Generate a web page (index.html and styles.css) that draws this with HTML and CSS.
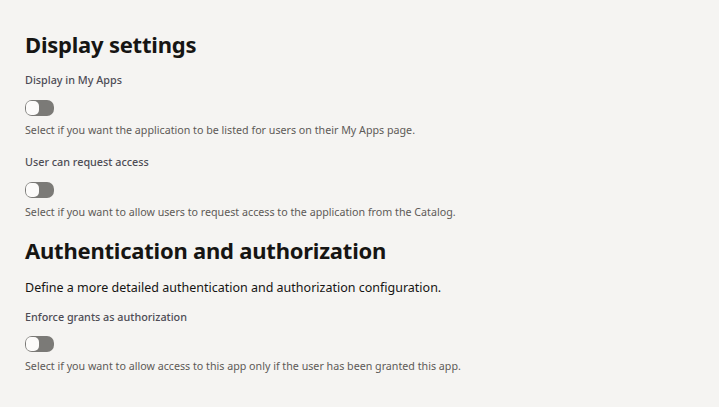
FILE: index.html
```html
<!DOCTYPE html>
<html lang="en">
<head>
  <meta charset="UTF-8">
  <title>Application settings</title>
  <link rel="stylesheet" href="styles.css">
</head>
<body>
  <div class="page">
    <section class="section">
      <h2 class="section-title">Display settings</h2>

      <div class="field">
        <div class="field-label">Display in My Apps</div>
        <button class="switch" type="button" aria-pressed="false"><span class="switch-knob"></span></button>
        <p class="field-help">Select if you want the application to be listed for users on their My Apps page.</p>
      </div>

      <div class="field">
        <div class="field-label">User can request access</div>
        <button class="switch" type="button" aria-pressed="false"><span class="switch-knob"></span></button>
        <p class="field-help">Select if you want to allow users to request access to the application from the Catalog.</p>
      </div>
    </section>

    <section class="section">
      <h2 class="section-title">Authentication and authorization</h2>
      <p class="section-desc">Define a more detailed authentication and authorization configuration.</p>

      <div class="field">
        <div class="field-label">Enforce grants as authorization</div>
        <button class="switch" type="button" aria-pressed="false"><span class="switch-knob"></span></button>
        <p class="field-help">Select if you want to allow access to this app only if the user has been granted this app.</p>
      </div>
    </section>
  </div>
</body>
</html>
```

FILE: styles.css
```css
:root {
  --bg: #f5f4f2;
  --text: #161513;
  --text-label: #4d4c55;
  --text-help: #5d5a57;
  --switch-track: #7b7a77;
  --switch-knob: #fcfbfa;
  --font-sans: "Noto Sans", "Open Sans", "Liberation Sans", sans-serif;
}

* {
  box-sizing: border-box;
  margin: 0;
  padding: 0;
}

body {
  background-color: var(--bg);
  color: var(--text);
  font-family: var(--font-sans);
  -webkit-font-smoothing: antialiased;
}

.page {
  padding: 30px 25px;
}

.section + .section {
  margin-top: 16px;
}

.section-title {
  font-size: 22px;
  font-weight: 700;
  line-height: 28px;
  color: var(--text);
  letter-spacing: -0.01em;
}

.section-desc {
  font-size: 12.5px;
  line-height: 20px;
  margin-top: 14px;
  color: var(--text);
}

.field {
  margin-top: 14px;
}

.field + .field {
  margin-top: 16px;
}

.section-desc + .field {
  margin-top: 11px;
}

.field-label {
  font-size: 10.8px;
  font-weight: 500;
  line-height: 16px;
  color: var(--text-label);
}

.switch {
  display: flex;
  align-items: center;
  width: 29px;
  height: 16px;
  margin-top: 12px;
  padding: 0 1px;
  border: none;
  border-radius: 7px;
  background-color: var(--switch-track);
  cursor: pointer;
}

.section-desc + .field .switch {
  margin-top: 11px;
}

.switch-knob {
  width: 13px;
  height: 14px;
  border-radius: 5px;
  background-color: var(--switch-knob);
}

.field-help {
  font-size: 10.7px;
  line-height: 16px;
  margin-top: 6px;
  color: var(--text-help);
}
```
